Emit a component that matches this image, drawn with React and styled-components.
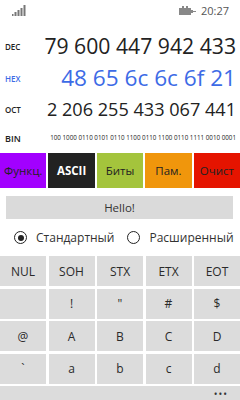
import React from "react";
import styled, { createGlobalStyle } from "styled-components";

const Global = createGlobalStyle`
  html, body { margin: 0; padding: 0; background: #fff; }
  body { font-family: "Open Sans", "Noto Sans", sans-serif; width: 240px; height: 400px; overflow: hidden; }
  * { box-sizing: border-box; }
`;

const Page = styled.div`
  width: 240px;
  height: 400px;
  display: flex;
  flex-direction: column;
  overflow: hidden;
  background: #fff;
  & > * { flex-shrink: 0; }
`;

const StatusBar = styled.div`
  height: 20px;
  display: flex;
  align-items: center;
  justify-content: space-between;
  padding: 0 11px 0 12px;
  color: #666;
`;

const StatusRight = styled.div`
  display: flex;
  align-items: center;
  gap: 5px;
  font-size: 11px;
  color: #555;
`;

const Display = styled.div`
  padding: 10px 4px 0 5px;
  display: flex;
  flex-direction: column;
`;

const ValueRow = styled.div`
  height: ${(p) => p.$h}px;
  display: flex;
  align-items: center;
  justify-content: space-between;
  color: ${(p) => (p.$blue ? "#3d6be6" : "#222")};
`;

const Label = styled.span`
  font-size: ${(p) => p.$size || 8}px;
  font-weight: 600;
`;

const Value = styled.span`
  font-size: ${(p) => p.$size}px;
  white-space: nowrap;
  line-height: 1;
`;

const ButtonRow = styled.div`
  display: grid;
  grid-template-columns: repeat(5, 1fr);
  gap: 2px;
  height: 35px;
`;

const ColorButton = styled.div`
  background: ${(p) => p.$bg};
  color: ${(p) => p.$fg};
  font-size: 11.5px;
  font-weight: ${(p) => (p.$bold ? 700 : 500)};
  display: flex;
  align-items: center;
  justify-content: center;
`;

const HelloBar = styled.div`
  margin: 8px 7px 0 6px;
  height: 23px;
  background: #dadada;
  color: #333;
  font-size: 11.5px;
  display: flex;
  align-items: center;
  justify-content: center;
`;

const RadioRow = styled.div`
  height: 37px;
  display: flex;
  align-items: center;
  padding-left: 14px;
  gap: 13px;
`;

const RadioOption = styled.label`
  display: flex;
  align-items: center;
  gap: 9px;
  font-size: 12px;
  color: #333;
`;

const RadioCircle = styled.span`
  width: 13px;
  height: 13px;
  border-radius: 50%;
  border: 1.5px solid #222;
  display: flex;
  align-items: center;
  justify-content: center;
  &::after {
    content: "";
    width: 6px;
    height: 6px;
    border-radius: 50%;
    background: ${(p) => (p.$checked ? "#222" : "transparent")};
  }
`;

const KeyGrid = styled.div`
  display: grid;
  grid-template-columns: repeat(5, 1fr);
  grid-auto-rows: 30px;
  gap: 2.5px;
`;

const Key = styled.div`
  background: #dcdcdc;
  color: #2a2a2a;
  font-size: 12px;
  display: flex;
  align-items: center;
  justify-content: center;
`;

const AppBar = styled.div`
  grid-column: 1 / -1;
  background: #dcdcdc;
  display: flex;
  justify-content: flex-end;
  align-items: flex-start;
  padding: 3px 12px 0 0;
  color: #333;
  font-size: 10px;
  letter-spacing: 1px;
  line-height: 1;
`;

const Signal = () => (
  <svg width="16" height="11" viewBox="0 0 16 11">
    <rect x="0" y="9" width="1.5" height="2" fill="#777" />
    <rect x="2.5" y="7" width="2" height="4" fill="#777" />
    <rect x="5.5" y="5" width="2" height="6" fill="#777" />
    <rect x="8.5" y="3" width="2" height="8" fill="#777" />
    <rect x="11.5" y="0" width="2" height="11" fill="#777" />
  </svg>
);

const Battery = () => (
  <svg width="17" height="9" viewBox="0 0 17 9">
    <rect x="0" y="2" width="12" height="7" fill="#888" />
    <rect x="3" y="0" width="2" height="2" fill="#888" />
    <rect x="7" y="0" width="2" height="2" fill="#888" />
    <rect x="12" y="4" width="2" height="3" fill="#888" />
    <rect x="14" y="5" width="3" height="1" fill="#888" />
  </svg>
);

const keys = [
  "NUL", "SOH", "STX", "ETX", "EOT",
  "", "!", "\"", "#", "$",
  "@", "A", "B", "C", "D",
  "`", "a", "b", "c", "d",
];

export default function App() {
  return (
    <Page>
      <Global />
      <StatusBar>
        <Signal />
        <StatusRight>
          <Battery />
          <span>20:27</span>
        </StatusRight>
      </StatusBar>
      <Display>
        <ValueRow $h={32}>
          <Label>DEC</Label>
          <Value $size={21.2}>79 600 447 942 433</Value>
        </ValueRow>
        <ValueRow $h={33} $blue>
          <Label>HEX</Label>
          <Value $size={22.6}>48 65 6c 6c 6f 21</Value>
        </ValueRow>
        <ValueRow $h={29}>
          <Label>OCT</Label>
          <Value $size={18.1}>2 206 255 433 067 441</Value>
        </ValueRow>
        <ValueRow $h={29}>
          <Label $size={9}>BIN</Label>
          <Value $size={6.25}>100 1000 0110 0101 0110 1100 0110 1100 0110 1111 0010 0001</Value>
        </ValueRow>
      </Display>
      <ButtonRow>
        <ColorButton $bg="#a200ff" $fg="#222">Функц.</ColorButton>
        <ColorButton $bg="#222222" $fg="#fff" $bold>ASCII</ColorButton>
        <ColorButton $bg="#a4c43c" $fg="#222">Биты</ColorButton>
        <ColorButton $bg="#f0960c" $fg="#222">Пам.</ColorButton>
        <ColorButton $bg="#e51400" $fg="#222">Очист</ColorButton>
      </ButtonRow>
      <HelloBar>Hello!</HelloBar>
      <RadioRow>
        <RadioOption>
          <RadioCircle $checked />
          Стандартный
        </RadioOption>
        <RadioOption>
          <RadioCircle />
          Расширенный
        </RadioOption>
      </RadioRow>
      <KeyGrid>
        {keys.map((k, i) => (
          <Key key={i}>{k}</Key>
        ))}
        <AppBar>•••</AppBar>
      </KeyGrid>
    </Page>
  );
}
